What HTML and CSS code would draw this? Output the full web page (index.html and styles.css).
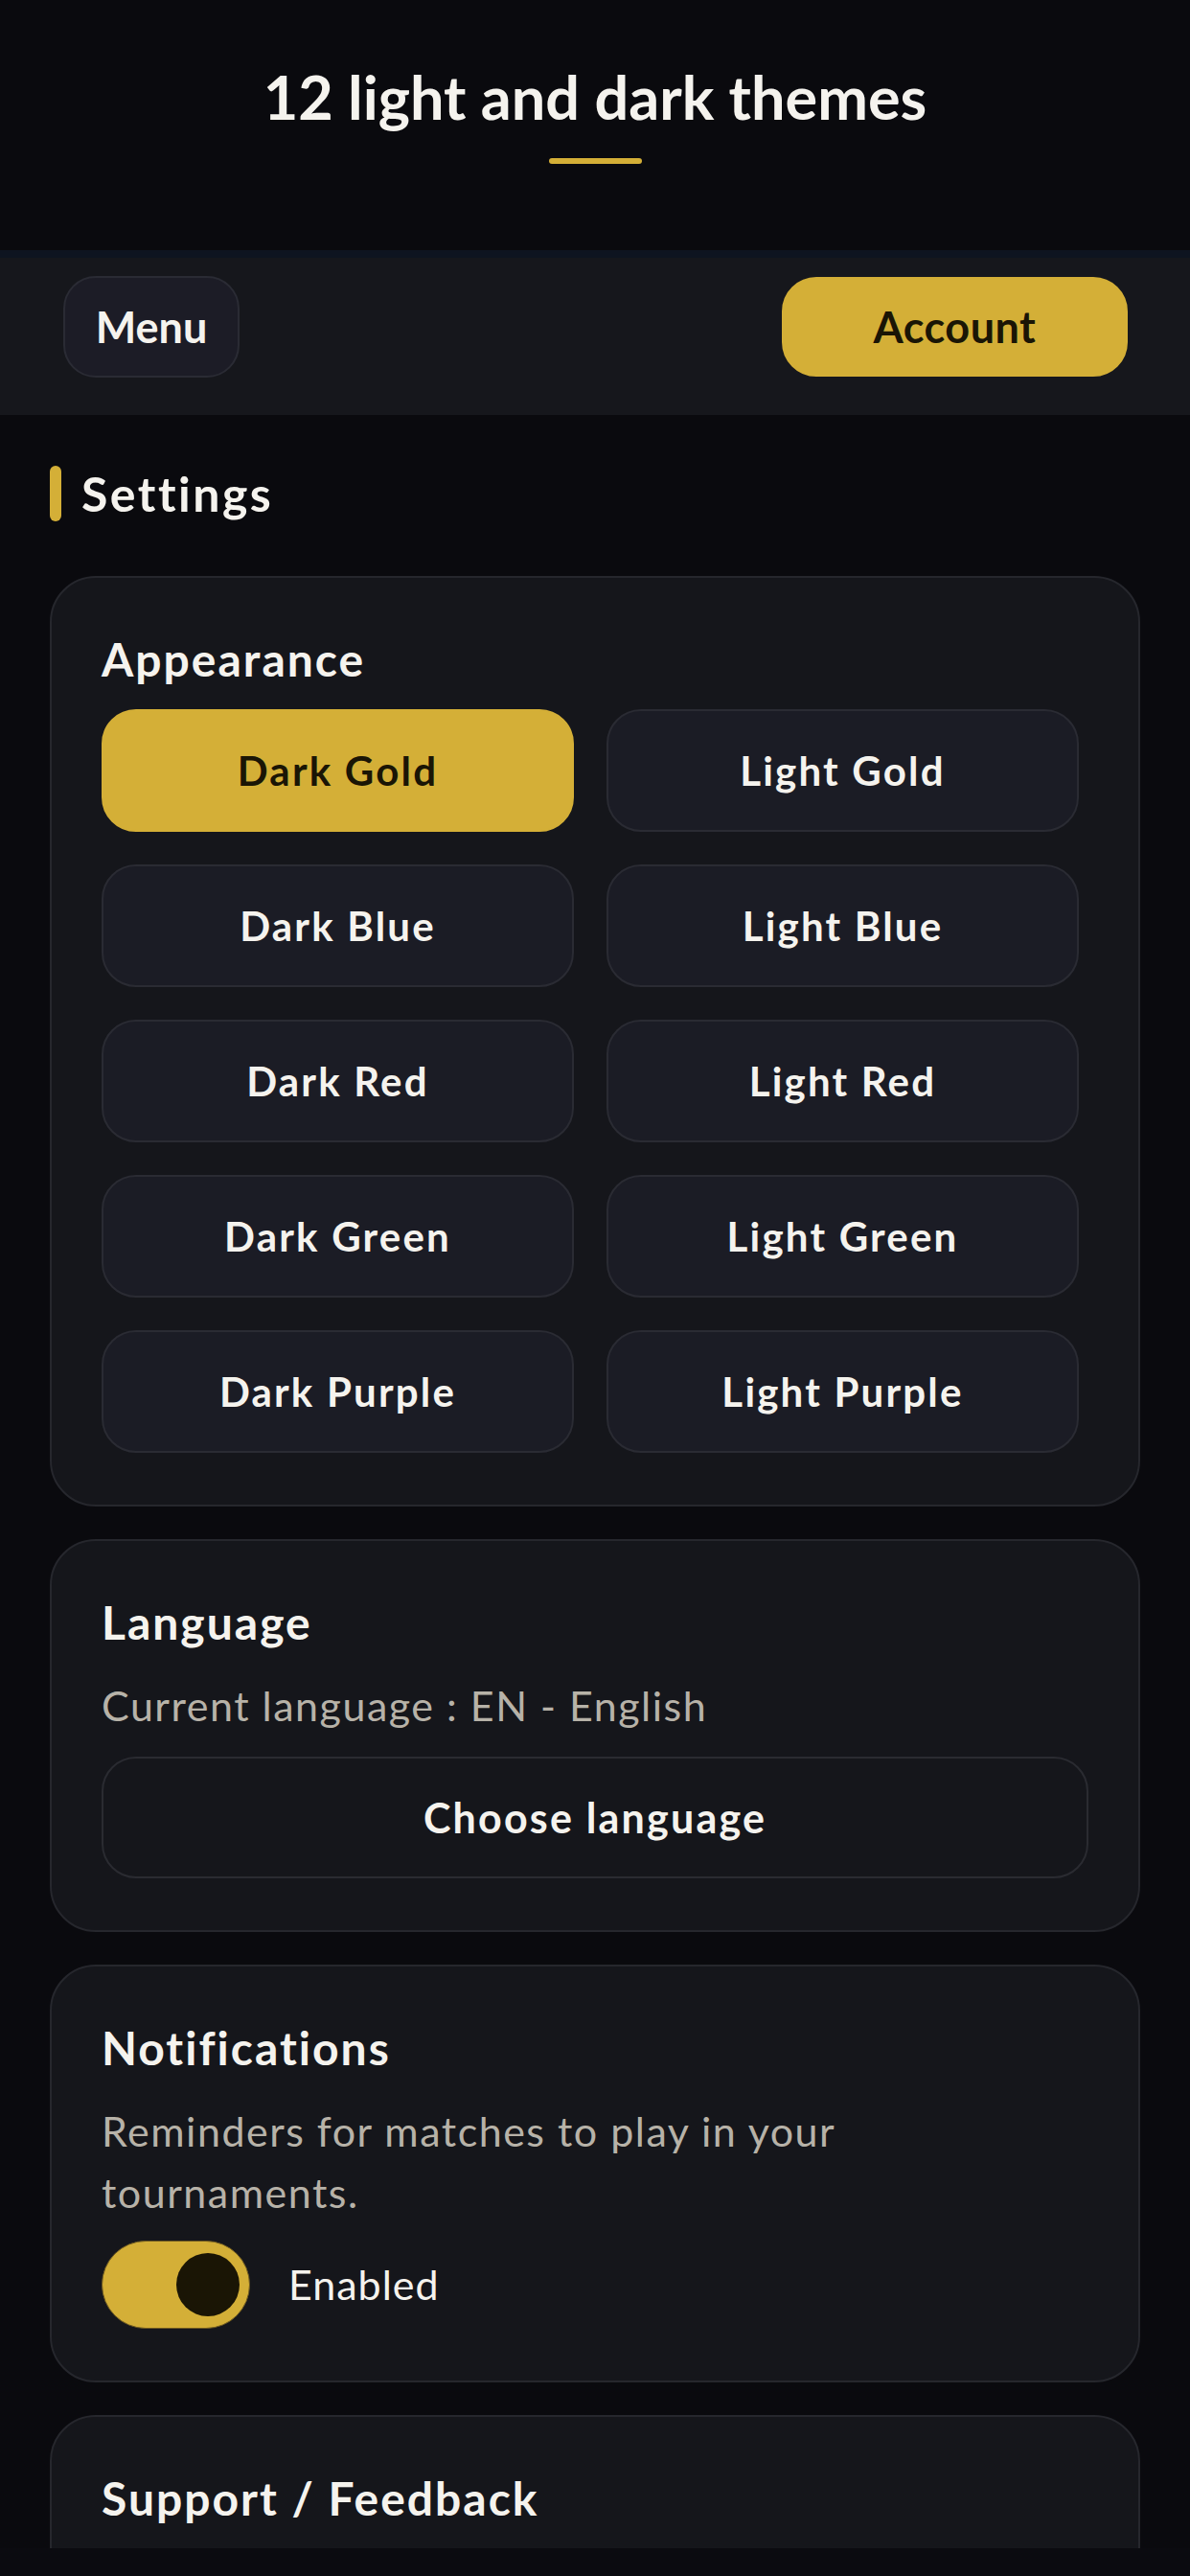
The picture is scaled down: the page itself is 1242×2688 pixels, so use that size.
FILE: index.html
```html
<!DOCTYPE html>
<html lang="en">
<head>
  <meta charset="UTF-8">
  <title>Settings</title>
  <link rel="stylesheet" href="styles.css">
</head>
<body>
  <div class="screen">
    <header class="hero">
      <h1>12 light and dark themes</h1>
      <span class="hero-line"></span>
    </header>

    <nav class="topbar">
      <button class="btn-menu">Menu</button>
      <button class="btn-account">Account</button>
    </nav>

    <main class="content">
      <h2 class="section-title">Settings</h2>

      <section class="card">
        <h3>Appearance</h3>
        <div class="themes">
          <button class="theme active">Dark Gold</button>
          <button class="theme">Light Gold</button>
          <button class="theme">Dark Blue</button>
          <button class="theme">Light Blue</button>
          <button class="theme">Dark Red</button>
          <button class="theme">Light Red</button>
          <button class="theme">Dark Green</button>
          <button class="theme">Light Green</button>
          <button class="theme">Dark Purple</button>
          <button class="theme">Light Purple</button>
        </div>
      </section>

      <section class="card">
        <h3>Language</h3>
        <p class="muted">Current language : EN - English</p>
        <button class="wide-btn">Choose language</button>
      </section>

      <section class="card">
        <h3>Notifications</h3>
        <p class="muted narrow">Reminders for matches to play in your tournaments.</p>
        <div class="toggle-row">
          <span class="toggle on"><span class="knob"></span></span>
          <span class="toggle-label">Enabled</span>
        </div>
      </section>

      <section class="card">
        <h3>Support / Feedback</h3>
        <button class="wide-btn" aria-label="Contact support"></button>
      </section>
    </main>

    <div class="bottom-safe"></div>
  </div>
</body>
</html>
```

FILE: styles.css
```css
* {
  box-sizing: border-box;
}
body {
  margin: 0;
  background: #0a0a0e;
  color: #f5f3ee;
  font-family: 'Lato', 'Noto Sans', sans-serif;
}
button {
  font-family: inherit;
  cursor: pointer;
}
.screen {
  height: 2688px;
  display: flex;
  flex-direction: column;
}

/* header */
.hero {
  background: #0a0a0e;
  padding: 63px 0 90px;
  display: flex;
  flex-direction: column;
  align-items: center;
}
.hero h1 {
  margin: 0;
  font-size: 63px;
  line-height: 1.2;
  font-weight: 700;
}
.hero-line {
  display: block;
  width: 97px;
  height: 6px;
  margin-top: 26px;
  border-radius: 3px;
  background: #d4af37;
}

/* top bar */
.topbar {
  background: #16171c;
  border-top: 8px solid #0e1420;
  padding: 19px 65px 39px 66px;
  display: flex;
  justify-content: space-between;
  align-items: center;
}
.btn-menu {
  width: 184px;
  height: 106px;
  border-radius: 34px;
  border: 2px solid #2a2b34;
  background: #1c1c26;
  color: #f5f3ee;
  font-size: 45px;
  font-weight: 700;
}
.btn-account {
  width: 361px;
  height: 104px;
  border-radius: 36px;
  border: 2px solid #d4af37;
  background: #d4af37;
  color: #1a1505;
  font-size: 45px;
  font-weight: 700;
  letter-spacing: 0.5px;
}

/* content */
.content {
  flex: 1;
  overflow: hidden;
  padding: 52px 52px 0;
}
.section-title {
  margin: 0 0 56px;
  display: flex;
  align-items: center;
  gap: 21px;
  font-size: 50px;
  line-height: 1.2;
  font-weight: 700;
  letter-spacing: 2.5px;
}
.section-title::before {
  content: '';
  width: 12px;
  height: 58px;
  border-radius: 6px;
  background: #d4af37;
}
.card {
  background: #15161b;
  border: 2px solid #26272d;
  border-radius: 48px;
  padding: 56px 52px 54px;
  margin-bottom: 34px;
}
.card h3 {
  margin: 0;
  font-size: 48px;
  line-height: 1.2;
  font-weight: 700;
  letter-spacing: 2px;
}
.themes {
  margin: 24px 10px 0 0;
  display: grid;
  grid-template-columns: 1fr 1fr;
  gap: 34px;
}
.theme {
  height: 128px;
  border-radius: 36px;
  border: 2px solid #2a2b33;
  background: #1b1c25;
  color: #f5f3ee;
  font-size: 42px;
  font-weight: 700;
  letter-spacing: 2.2px;
}
.theme.active {
  background: #d4af37;
  border-color: #d4af37;
  color: #1a1505;
}
.muted {
  margin: 26px 0 0;
  font-size: 43px;
  line-height: 1.5;
  color: #b7b2a8;
  letter-spacing: 1.5px;
}
.narrow {
  max-width: 960px;
}
.wide-btn {
  display: block;
  width: 100%;
  height: 127px;
  margin-top: 21px;
  border-radius: 36px;
  border: 2px solid #2a2b31;
  background: #15161b;
  color: #f5f3ee;
  font-size: 43px;
  font-weight: 700;
  letter-spacing: 2.2px;
}
.card h3 + .wide-btn {
  margin-top: 26px;
}
.toggle-row {
  margin-top: 17px;
  display: flex;
  align-items: center;
  gap: 40px;
}
.toggle {
  width: 155px;
  height: 92px;
  border-radius: 46px;
  background: #d4af37;
  border: 1px solid #6b5720;
  display: flex;
  align-items: center;
  justify-content: flex-end;
  padding-right: 10px;
}
.knob {
  width: 66px;
  height: 66px;
  border-radius: 50%;
  background: #1a1505;
}
.toggle-label {
  font-size: 43px;
  letter-spacing: 1px;
}
.bottom-safe {
  height: 29px;
  background: #0b0b10;
}
```
